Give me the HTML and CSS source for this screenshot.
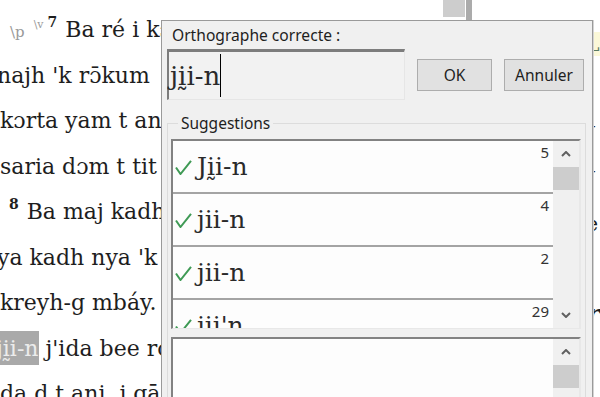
FILE: index.html
```html
<!DOCTYPE html>
<html lang="fr">
<head>
  <meta charset="UTF-8" />
  <title>Orthographe correcte</title>
  <link rel="stylesheet" href="styles.css">
</head>
<body>
  <!-- Editor behind the dialog -->
  <div class="workspace">
    <div class="editor">
      <p class="line"><span class="marker">\p</span> <span class="marker small">\v</span><span class="vnum">7</span> Ba ré i kɔ̄ ndɔ yaa</p>
      <p class="line shift">najh 'k rɔ̄kum&nbsp; ndi ba</p>
      <p class="line">kɔrta yam t ani gī</p>
      <p class="line">saria dɔm t tit ba</p>
      <p class="line shift2"><span class="marker small">\v</span> <span class="vnum">8</span> Ba maj kadh ɓa</p>
      <p class="line shift">ya kadh nya 'k ndɔ</p>
      <p class="line">kreyh-g mbáy. Ba</p>
      <p class="line shift3"><span class="hl">jḭi-n</span> j'ida bee ro</p>
      <p class="line">da d t ani, j gā</p>
    </div>
    <div class="vscroll"><div class="vthumb"></div></div>
    <div class="side">
      <p class="side-line"><span class="tag">L</span></p>
      <p class="side-line">(</p>
      <p class="side-line strong">J</p>
      <p class="side-line strong">J</p>
      <p class="side-line">e</p>
      <p class="side-line">ı</p>
      <p class="side-line strong italic">r</p>
      <p class="side-line">.</p>
    </div>
  </div>

  <!-- Spelling dialog -->
  <div class="dialog">
    <div class="label">Orthographe correcte :</div>
    <div class="entry-row">
      <div class="entry">jḭi-n<span class="caret"></span></div>
      <button class="btn btn-ok">OK</button>
      <button class="btn">Annuler</button>
    </div>

    <fieldset class="group">
      <legend>Suggestions</legend>

      <div class="listbox">
        <ul class="items">
          <li class="item">
            <svg class="check" viewBox="0 0 17 15"><path d="M1 7.5 L5.5 14 L16 0.8"/></svg>
            <span class="word">Jḭi-n</span>
            <span class="count">5</span>
          </li>
          <li class="item">
            <svg class="check" viewBox="0 0 17 15"><path d="M1 7.5 L5.5 14 L16 0.8"/></svg>
            <span class="word">jii-n</span>
            <span class="count">4</span>
          </li>
          <li class="item">
            <svg class="check" viewBox="0 0 17 15"><path d="M1 7.5 L5.5 14 L16 0.8"/></svg>
            <span class="word">jii-n</span>
            <span class="count">2</span>
          </li>
          <li class="item">
            <svg class="check" viewBox="0 0 17 15"><path d="M1 7.5 L5.5 14 L16 0.8"/></svg>
            <span class="word">jii'n</span>
            <span class="count">29</span>
          </li>
        </ul>
        <div class="scrollbar">
          <div class="arrow"><svg viewBox="0 0 10 6"><path d="M1 5 L5 1 L9 5"/></svg></div>
          <div class="thumb"></div>
          <div class="track"></div>
          <div class="arrow"><svg viewBox="0 0 10 6"><path d="M1 1 L5 5 L9 1"/></svg></div>
        </div>
      </div>

      <div class="listbox lower">
        <ul class="items"></ul>
        <div class="scrollbar">
          <div class="arrow"><svg viewBox="0 0 10 6"><path d="M1 5 L5 1 L9 5"/></svg></div>
          <div class="thumb"></div>
          <div class="track"></div>
        </div>
      </div>
    </fieldset>
  </div>
</body>
</html>
```

FILE: styles.css
```css
* {
  box-sizing: border-box;
}

body {
  margin: 0;
  width: 600px;
  height: 397px;
  overflow: hidden;
  background: #fff;
  font-family: 'DejaVu Serif', serif;
  color: #1e1e1e;
}

.workspace {
  display: flex;
  height: 397px;
}

.editor {
  width: 452px;
  overflow: hidden;
  padding-top: 7px;
  font-size: 22px;
  white-space: nowrap;
}

.line {
  margin: 0;
  line-height: 45.5px;
}

.line.shift {
  margin-left: -3px;
}

.line.shift2 {
  margin-left: -14px;
}

.line.shift3 {
  margin-left: -10px;
}

.marker {
  font-size: 15px;
  line-height: 0;
  color: #9a9a9a;
  margin-left: 10px;
}

.marker.small {
  font-size: 11px;
  vertical-align: 9px;
  margin-left: 2px;
}

.vnum {
  font-size: 14px;
  line-height: 0;
  font-weight: bold;
  vertical-align: 10px;
  margin-left: 4px;
  margin-right: 1px;
}

.hl {
  background: #a9a9a9;
  color: #ececec;
  padding: 5px 0 4px 6px;
}

.vscroll {
  width: 29px;
  display: flex;
  background: #fff;
}

.vthumb {
  width: 22px;
  height: 17px;
  background: #cdcdcd;
}

.vscroll::after {
  content: "";
  width: 6px;
  margin-left: 1px;
  background: #ababab;
}

.side {
  flex: 1;
  padding: 22px 0 0 114px;
  font-size: 20px;
  white-space: nowrap;
}

.side-line {
  margin: 0;
  line-height: 45px;
}

.side-line .tag {
  background: #fbf8d8;
  color: #5c7a60;
}

.strong {
  font-weight: bold;
}

.italic {
  font-style: italic;
  font-size: 26px;
}

/* dialog */
.dialog {
  position: absolute;
  left: 161px;
  top: 20px;
  width: 432px;
  height: 400px;
  padding: 0 6px 0 5px;
  background: #f0f0f0;
  border: 1px solid #9a9a9a;
  box-shadow: 1px 0 0 #d4d4d4;
  font-family: 'Noto Sans', sans-serif;
  color: #1e1e1e;
}

.label {
  height: 28px;
  line-height: 28px;
  padding-left: 5px;
  font-size: 15.6px;
}

.entry-row {
  display: flex;
  align-items: center;
  gap: 12px;
}

.entry {
  width: 238px;
  height: 51px;
  display: flex;
  align-items: center;
  padding-left: 1px;
  background: #f2f2f2;
  border-top: 3px solid #7d7d7d;
  border-left: 2px solid #7d7d7d;
  border-right: 1px solid #e6e6e6;
  border-bottom: 1px solid #e6e6e6;
  font-family: 'DejaVu Serif', serif;
  font-size: 26px;
  color: #2a2a2a;
}

.caret {
  width: 1px;
  height: 43px;
  background: #000;
  margin-left: 0;
}

.btn {
  width: 75px;
  height: 32px;
  padding: 0;
  background: #e1e1e1;
  border: 1px solid #adadad;
  border-radius: 0;
  font-family: 'Noto Sans', sans-serif;
  font-size: 15.5px;
  color: #1e1e1e;
}

.btn + .btn {
  width: 80px;
}

.group {
  margin: 13px 0 0;
  padding: 6px 4px 0 3px;
  border: 1px solid #dcdcdc;
  height: 300px;
}

.group legend {
  margin-left: 7px;
  padding: 0 3px;
  font-size: 15.5px;
  line-height: 20px;
}

.listbox {
  display: flex;
  height: 190px;
  background: #fdfdfd;
  border-top: 2px solid #828282;
  border-left: 2px solid #828282;
  border-right: 2px solid #e8e8e8;
  border-bottom: 1px solid #e8e8e8;
}

.listbox.lower {
  margin-top: 8px;
  height: 120px;
}

.items {
  flex: 1;
  margin: 0;
  padding: 0;
  list-style: none;
  overflow: hidden;
}

.item {
  display: flex;
  align-items: flex-start;
  height: 53px;
  border-bottom: 2px solid #a4a4a4;
}

.check {
  width: 17px;
  height: 15px;
  margin: 19px 0 0 2px;
  fill: none;
  stroke: #3f9a55;
  stroke-width: 2;
}

.word {
  flex: 1;
  margin: 11px 0 0 5px;
  font-family: 'DejaVu Serif', serif;
  font-size: 25px;
  color: #2a2a2a;
}

.count {
  margin: 1px 4px 0 0;
  font-size: 15px;
  color: #333;
}

.scrollbar {
  width: 26px;
  display: flex;
  flex-direction: column;
  background: #f0f0f0;
}

.arrow {
  height: 26px;
  display: flex;
  align-items: center;
  justify-content: center;
}

.arrow svg {
  width: 10px;
  height: 6px;
  fill: none;
  stroke: #606060;
  stroke-width: 2;
}

.thumb {
  height: 23px;
  background: #cdcdcd;
}

.track {
  flex: 1;
}
```
